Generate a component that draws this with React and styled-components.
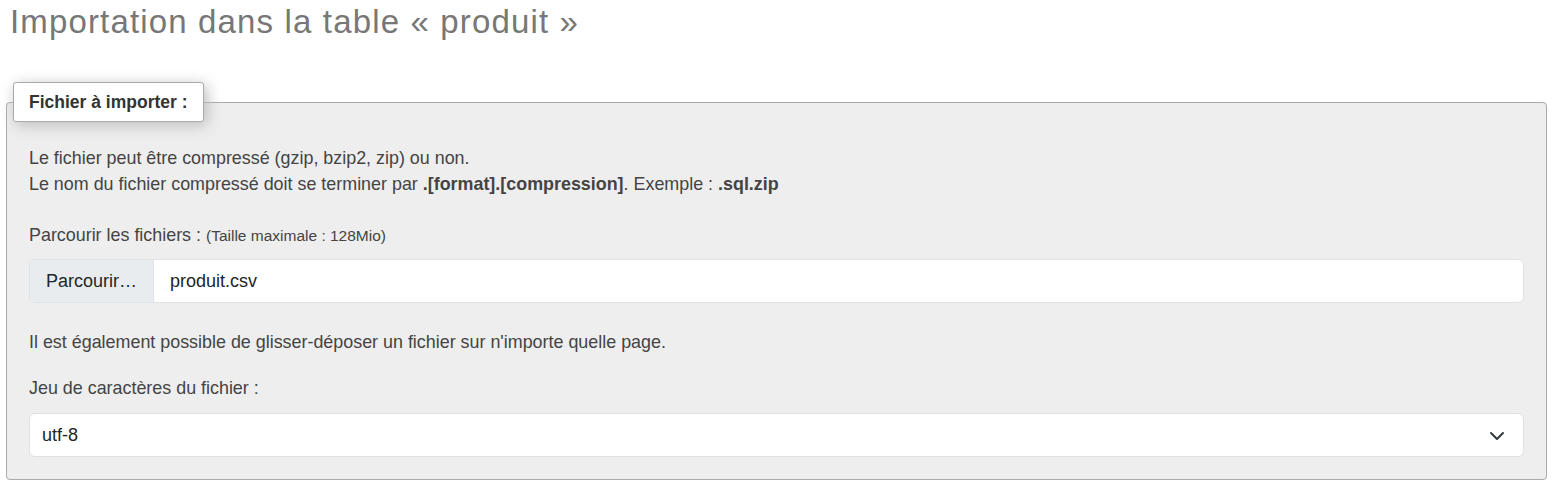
import React, { useState } from "react"
import styled, { createGlobalStyle } from "styled-components"

const GlobalStyle = createGlobalStyle`
  body {
    margin: 0;
    background: #fff;
    font-family: "Liberation Sans", Arial, sans-serif;
    font-size: 17.9px;
    color: #444;
  }
`

const Page = styled.div`
  padding: 3px 6px 6px;
`

const Heading = styled.h2`
  margin: 0 0 41px 4px;
  font-size: 33px;
  line-height: 38px;
  letter-spacing: 1.15px;
  font-weight: normal;
  color: #777;
`

const Fieldset = styled.fieldset`
  margin: 0;
  padding: 22px;
  background: #eee;
  border: 1px solid #aaa;
  border-radius: 4px;
  min-width: 0;
`

const Legend = styled.legend`
  margin-left: -16px;
  padding: 10px 15px;
  background: #fff;
  border: 1px solid #aaa;
  border-radius: 3px;
  box-shadow: 3px 3px 15px #bbb;
  font-size: 17.5px;
  font-weight: bold;
  line-height: 18px;
  color: #333;
`

const Text = styled.p`
  margin: ${(p) => p.$top || 0}px 0 0;
  line-height: 26px;
`

const Small = styled.span`
  font-size: 15.5px;
`

const InputGroup = styled.div`
  display: flex;
  margin-top: ${(p) => p.$top || 0}px;
  height: 44px;
  box-sizing: border-box;
  border: 1px solid #dee2e6;
  border-radius: 6px;
  background: #fff;
  overflow: hidden;
`

const BrowseButton = styled.label`
  display: flex;
  align-items: center;
  padding: 0 16px;
  background: #e9ecef;
  border-right: 1px solid #dee2e6;
  font-size: 18px;
  color: #212529;
  cursor: pointer;
`

const FileName = styled.span`
  display: flex;
  align-items: center;
  padding: 0 16px;
  font-size: 18px;
  color: #212529;
`

const SelectWrap = styled.div`
  position: relative;
  margin-top: ${(p) => p.$top || 0}px;
`

const Select = styled.select`
  display: block;
  width: 100%;
  height: 44px;
  box-sizing: border-box;
  padding: 0 40px 0 12px;
  appearance: none;
  background: #fff;
  border: 1px solid #dee2e6;
  border-radius: 6px;
  font-family: inherit;
  font-size: 18px;
  color: #212529;
  outline: none;
`

const Chevron = styled.svg`
  position: absolute;
  right: 19px;
  top: 16px;
  width: 16px;
  height: 12px;
  pointer-events: none;
`

const App = () => {
  const [charset, setCharset] = useState("utf-8")

  return (
    <Page>
      <GlobalStyle />
      <Heading>Importation dans la table « produit »</Heading>
      <Fieldset>
        <Legend>Fichier à importer :</Legend>
        <Text $top={1}>
          Le fichier peut être compressé (gzip, bzip2, zip) ou non.
          <br />
          Le nom du fichier compressé doit se terminer par <b>.[format].[compression]</b>. Exemple : <b>.sql.zip</b>
        </Text>
        <Text $top={25}>
          Parcourir les fichiers : <Small>(Taille maximale : 128Mio)</Small>
        </Text>
        <InputGroup $top={10}>
          <BrowseButton>Parcourir…</BrowseButton>
          <FileName>produit.csv</FileName>
        </InputGroup>
        <Text $top={26}>Il est également possible de glisser-déposer un fichier sur n'importe quelle page.</Text>
        <Text $top={20}>Jeu de caractères du fichier :</Text>
        <SelectWrap $top={12}>
          <Select value={charset} onChange={(e) => setCharset(e.target.value)}>
            <option value="utf-8">utf-8</option>
            <option value="iso-8859-1">iso-8859-1</option>
          </Select>
          <Chevron viewBox="0 0 16 12">
            <path d="m2 4 6 6 6-6" fill="none" stroke="#343a40" strokeWidth="2" strokeLinecap="round" strokeLinejoin="round" />
          </Chevron>
        </SelectWrap>
      </Fieldset>
    </Page>
  )
}

export default App
